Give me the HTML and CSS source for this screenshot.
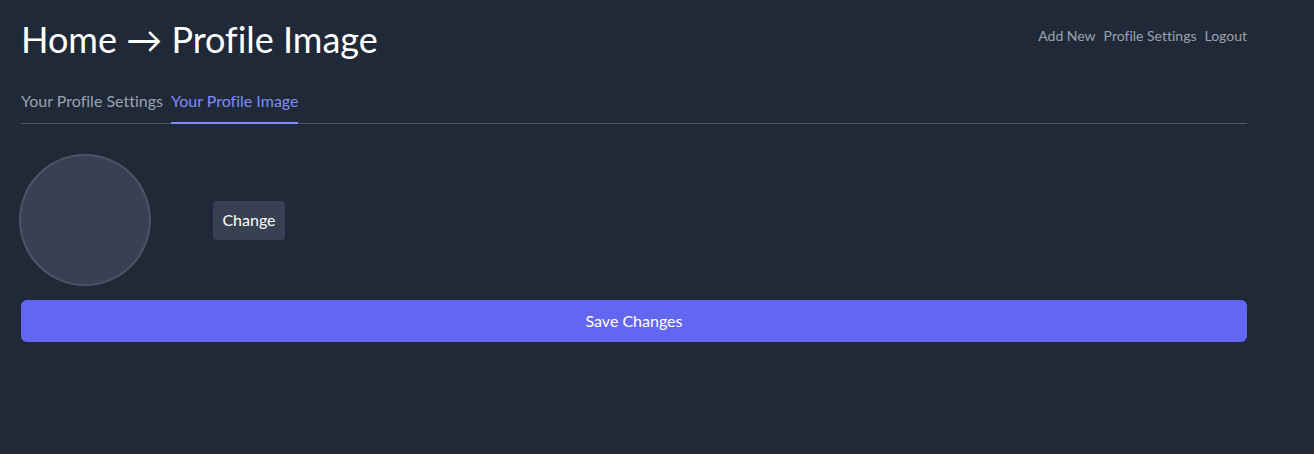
FILE: index.html
```html
<!DOCTYPE html>
<html lang="en">
<head>
<meta charset="utf-8">
<title>Profile Image</title>
<link rel="stylesheet" href="styles.css">
</head>
<body>
<div class="page">
  <header class="header">
    <h1 class="title">Home → Profile Image</h1>
    <nav class="nav">
      <a class="nav-link" href="#">Add New</a>
      <a class="nav-link" href="#">Profile Settings</a>
      <a class="nav-link" href="#">Logout</a>
    </nav>
  </header>
  <div class="tabs">
    <a class="tab" href="#">Your Profile Settings</a>
    <a class="tab tab-active" href="#">Your Profile Image</a>
  </div>
  <div class="avatar-row">
    <div class="avatar"></div>
    <button class="change-btn" type="button">Change</button>
  </div>
  <button class="save-btn" type="button">Save Changes</button>
</div>
</body>
</html>
```
FILE: styles.css
```css
* { box-sizing: border-box; }
html, body {
  margin: 0;
  padding: 0;
  background: #1f2937;
  height: 100%;
}
body {
  font-family: Lato, "Noto Sans", sans-serif;
  font-variant-ligatures: none;
  color: #fff;
}
.page {
  width: 1226px;
  margin-left: 21px;
  padding-top: 17px;
}
.header {
  display: flex;
  justify-content: space-between;
  align-items: flex-start;
}
.title {
  margin: 0;
  font-size: 36px;
  font-weight: 400;
  line-height: 44px;
  color: #fff;
}
.nav {
  display: flex;
  gap: 8px;
  padding-top: 9px;
}
.nav-link {
  color: #9ca3af;
  font-size: 14px;
  text-decoration: none;
  line-height: 20px;
}
.tabs {
  display: flex;
  gap: 8px;
  margin-top: 28px;
  border-bottom: 1px solid #4b5563;
}
.tab {
  color: #9ca3af;
  font-size: 16px;
  text-decoration: none;
  line-height: 24px;
  padding-bottom: 9px;
  border-bottom: 2px solid transparent;
  margin-bottom: -1px;
}
.tab-active {
  color: #818cf8;
  border-bottom-color: #818cf8;
}
.avatar-row {
  display: flex;
  align-items: center;
  gap: 64px;
  margin-top: 32px;
}
.avatar {
  width: 128px;
  height: 128px;
  border-radius: 50%;
  background: #374151;
  box-shadow: 0 0 0 2px #4b5563;
}
.change-btn {
  font-family: inherit;
  font-variant-ligatures: none;
  font-size: 16px;
  color: #fff;
  background: #374151;
  border: none;
  border-radius: 4px;
  height: 39px;
  width: 72px;
  padding: 0 0 2px;
}
.save-btn {
  display: block;
  width: 100%;
  margin-top: 16px;
  height: 42px;
  padding: 0 0 2px;
  font-family: inherit;
  font-variant-ligatures: none;
  font-size: 16px;
  color: #fff;
  background: #6366f1;
  border: none;
  border-radius: 6px;
}
```
